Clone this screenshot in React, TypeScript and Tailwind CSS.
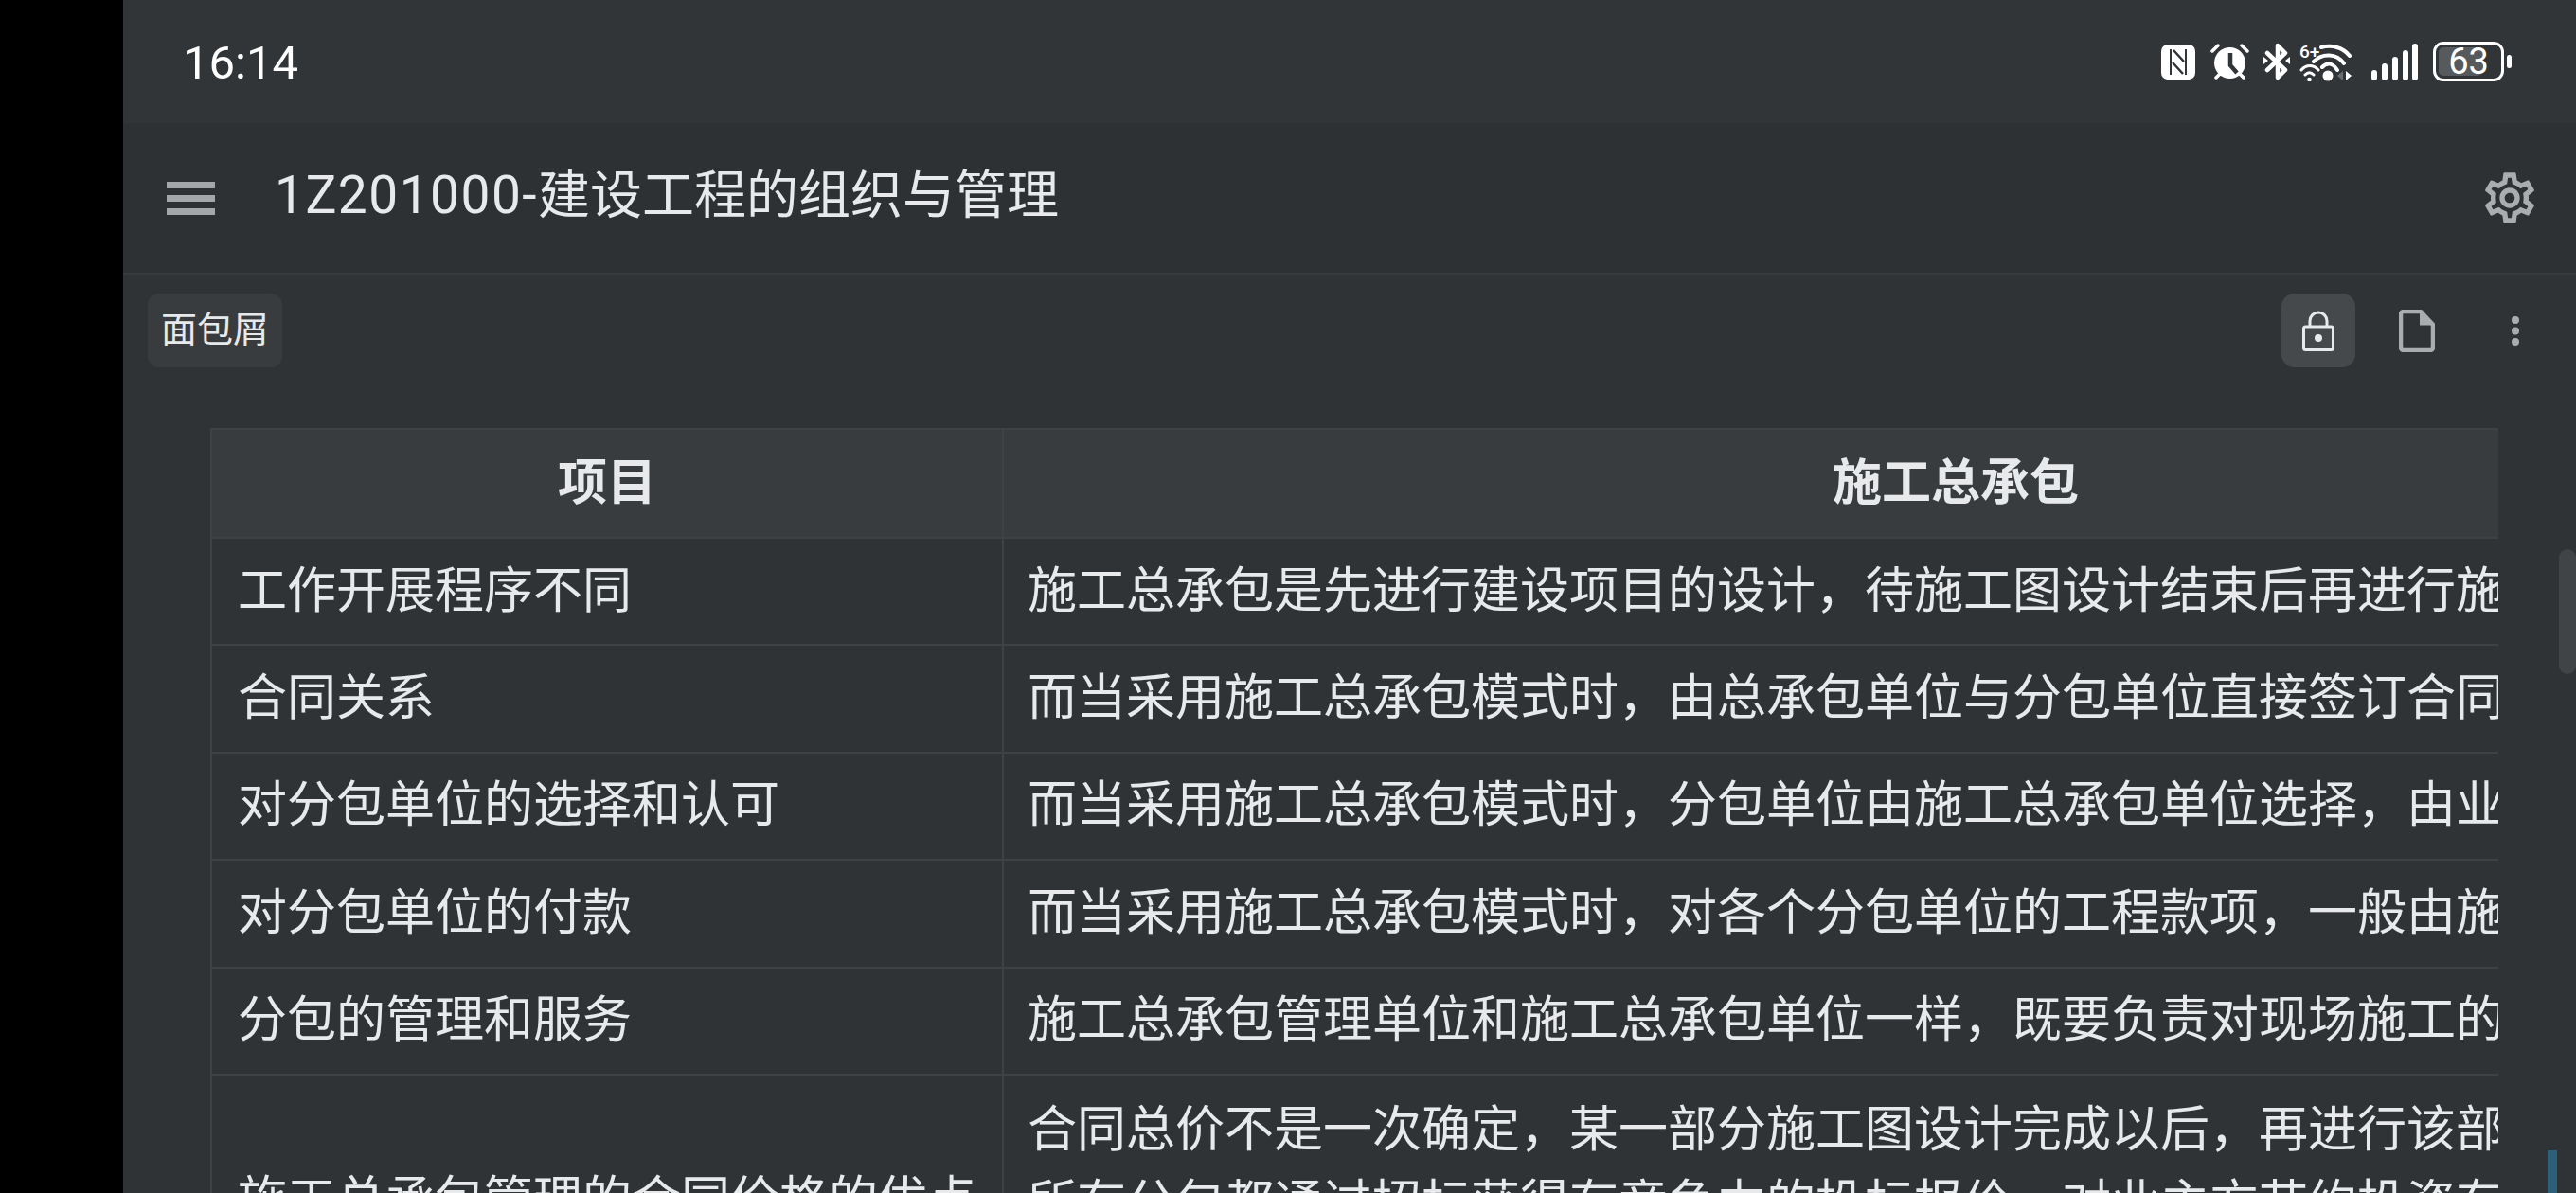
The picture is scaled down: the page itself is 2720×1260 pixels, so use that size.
import { MdOutlineSettings } from "react-icons/md";

const rows = [
  { name: "工作开展程序不同", text: "施工总承包是先进行建设项目的设计，待施工图设计结束后再进行施工" },
  { name: "合同关系", text: "而当采用施工总承包模式时，由总承包单位与分包单位直接签订合同" },
  { name: "对分包单位的选择和认可", text: "而当采用施工总承包模式时，分包单位由施工总承包单位选择，由业主" },
  { name: "对分包单位的付款", text: "而当采用施工总承包模式时，对各个分包单位的工程款项，一般由施工" },
  { name: "分包的管理和服务", text: "施工总承包管理单位和施工总承包单位一样，既要负责对现场施工的组织" },
];

function NfcIcon() {
  return (
    <svg width="36" height="37" viewBox="0 0 36 37">
      <rect width="36" height="37" rx="7" fill="#fff" />
      <path d="M10 5v27M26 5v27" stroke="#323538" strokeWidth="2" />
      <path d="M13 6l11 12M12 19l11 12" stroke="#323538" strokeWidth="2.500" />
    </svg>
  );
}

function AlarmIcon() {
  return (
    <svg width="41" height="38" viewBox="0 0 41 38">
      <circle cx="20.500" cy="20.500" r="16.500" fill="#fff" />
      <path d="M21 10v13l7 8" stroke="#323538" strokeWidth="4.500" fill="none" />
      <path d="M2 8l6-6M39 8l-6-6M6 36l4-4M35 36l-4-4" stroke="#fff" strokeWidth="3.500" strokeLinecap="round" />
    </svg>
  );
}

function BluetoothIcon() {
  return (
    <svg width="28" height="40" viewBox="0 0 28 40">
      <path d="M4 11l19 18-8 8V3l8 8L4 29" stroke="#fff" strokeWidth="4.500" fill="none" strokeLinecap="round" strokeLinejoin="round" />
      <path d="M0 15l5 4-5 4zM28 15l-5 4 5 4z" fill="#fff" />
    </svg>
  );
}

function WifiIcon() {
  return (
    <svg width="55" height="41" viewBox="0 0 55 41">
      <text x="0" y="16" fontSize="19" fontWeight="500" fill="#fff" fontFamily="Roboto, sans-serif">6+</text>
      <path d="M23 5c11-3 23 0 30 9M15 20c9-9 24-9 32 2M24 26c5-5 11-5 16 3" stroke="#fff" strokeWidth="4" fill="none" strokeLinecap="round" />
      <path d="M2 29c5-6 13-6 18 0M6 34c3-3 6-3 9 0" stroke="#fff" strokeWidth="3" fill="none" strokeLinecap="round" />
      <circle cx="10.500" cy="39" r="2.300" fill="#fff" />
      <circle cx="30" cy="35" r="5.500" fill="#fff" />
      <path d="M40 35l6-5v10z" fill="#6b6e70" />
      <path d="M49 30l6 5-6 5z" fill="#fff" />
    </svg>
  );
}

function SignalIcon() {
  return (
    <svg width="49" height="39" viewBox="0 0 49 39" fill="#fff">
      <rect x="0" y="28" width="6" height="11" rx="3" />
      <rect x="11" y="21" width="6" height="18" rx="3" />
      <rect x="22" y="14" width="6" height="25" rx="3" />
      <rect x="33" y="7" width="6" height="32" rx="3" />
      <rect x="43" y="0" width="6" height="39" rx="3" />
    </svg>
  );
}

function BatteryIcon() {
  return (
    <div className="flex items-center gap-[3px]">
      <div className="relative flex h-[42px] w-[75px] items-center justify-center rounded-[11px] border-[3px] border-white">
        <div className="absolute inset-y-[3px] left-[3px] w-[46px] rounded-[5px] bg-[#565a5d]" />
        <span className="relative text-[38px] leading-none text-white">63</span>
      </div>
      <div className="h-[14px] w-[5px] rounded-full bg-white" />
    </div>
  );
}

export default function App() {
  return (
    <div className="relative flex h-screen overflow-hidden bg-black font-[Roboto,'Noto_Sans_CJK_SC',sans-serif]">
      <aside className="w-[130px] shrink-0 bg-black" />

      <main className="flex min-w-0 flex-1 flex-col bg-[#303336] text-[#e7e9eb]">
        {/* Barra de estado */}
        <div className="flex h-[130px] shrink-0 items-center justify-between bg-[#323538] pl-[63px] pr-[68px]">
          <span className="mt-[2px] text-[49px] leading-none text-white">16:14</span>
          <div className="flex items-center">
            <NfcIcon />
            <div className="ml-[16px]"><AlarmIcon /></div>
            <div className="ml-[15px]"><BluetoothIcon /></div>
            <div className="ml-[10px]"><WifiIcon /></div>
            <div className="ml-[21px]"><SignalIcon /></div>
            <div className="ml-[16px]"><BatteryIcon /></div>
          </div>
        </div>

        {/* Cabecera */}
        <header className="flex h-[160px] shrink-0 items-center border-b-2 border-[#383b3e] bg-[#2e3134] pl-[46px] pr-[38px]">
          <svg width="51" height="35" viewBox="0 0 51 35" fill="#a3a7aa">
            <rect y="0" width="51" height="7" />
            <rect y="14" width="51" height="7" />
            <rect y="28" width="51" height="7" />
          </svg>
          <h1 className="mb-[6px] ml-[63px] flex-1 text-[55px] leading-none font-normal text-[#e7e9eb]">
            <span className="tracking-[1.5px]">1Z201000-</span>建设工程的组织与管理
          </h1>
          <MdOutlineSettings size={64} color="#a9adb0" />
        </header>

        {/* Barra de herramientas */}
        <div className="flex h-[162px] shrink-0 items-start justify-between pl-[26px] pr-[60px] pt-[20px]">
          <div className="flex h-[78px] w-[142px] items-center justify-center rounded-[12px] bg-[#393c3f] pb-[2px] text-[38px] leading-none">面包屑</div>
          <div className="flex items-center">
            <div className="flex size-[78px] items-center justify-center rounded-[14px] bg-[#45494c]">
              <svg width="34" height="43" viewBox="0 0 34 43" fill="none">
                <path d="M8 17V11a9 9 0 0 1 18 0v6" stroke="#e7e9eb" strokeWidth="3" />
                <rect x="1.500" y="17" width="31" height="24.500" rx="2" stroke="#e7e9eb" strokeWidth="3" />
                <circle cx="17" cy="29" r="4" fill="#e7e9eb" />
              </svg>
            </div>
            <svg className="ml-[46px]" width="38" height="45" viewBox="0 0 38 45">
              <path d="M4.500 2H23L36 16V40a3 3 0 0 1-3 3H5a3 3 0 0 1-3-3V4.500a3 3 0 0 1 2.500-2.500z" fill="none" stroke="#a9adb0" strokeWidth="4.500" />
              <path d="M22 2l14 14.500H22z" fill="#a9adb0" />
            </svg>
            <svg className="ml-[81px]" width="8" height="31" viewBox="0 0 8 31" fill="#a9adb0">
              <circle cx="4" cy="4" r="4" />
              <circle cx="4" cy="15.500" r="4" />
              <circle cx="4" cy="27" r="4" />
            </svg>
          </div>
        </div>

        {/* Tabla */}
        <div className="ml-[92px] mr-[82px] overflow-hidden">
          <table className="w-[2848px] table-fixed border-collapse text-[52px] leading-[78px]">
            <thead>
              <tr className="h-[115px] bg-[#393c3f]">
                <th className="w-[836px] border-2 border-[#3e4245] px-[25px] font-bold">项目</th>
                <th className="w-[2012px] border-2 border-[#3e4245] px-[25px] font-bold">施工总承包</th>
              </tr>
            </thead>
            <tbody>
              {rows.map((row) => (
                <tr key={row.name} className="h-[113.4px]">
                  <td className="whitespace-nowrap border-2 border-[#3e4245] px-[27px]">{row.name}</td>
                  <td className="whitespace-nowrap border-2 border-[#3e4245] px-[25px]">{row.text}</td>
                </tr>
              ))}
              <tr className="h-[266px]">
                <td className="whitespace-nowrap border-2 border-[#3e4245] px-[27px]">施工总承包管理的合同价格的优点</td>
                <td className="whitespace-nowrap border-2 border-[#3e4245] px-[25px] pt-[19px] align-top">
                  合同总价不是一次确定，某一部分施工图设计完成以后，再进行该部分
                  <br />
                  所有分包都通过招标获得有竞争力的投标报价，对业主方节约投资有
                </td>
              </tr>
            </tbody>
          </table>
        </div>
      </main>

      {/* Barras de desplazamiento */}
      <div className="absolute right-0 top-[580px] h-[132px] w-[18px] rounded-full bg-[#414447]" />
      <div className="absolute bottom-0 right-[20px] h-[45px] w-[10px] bg-[#2c6078]" />
    </div>
  );
}
